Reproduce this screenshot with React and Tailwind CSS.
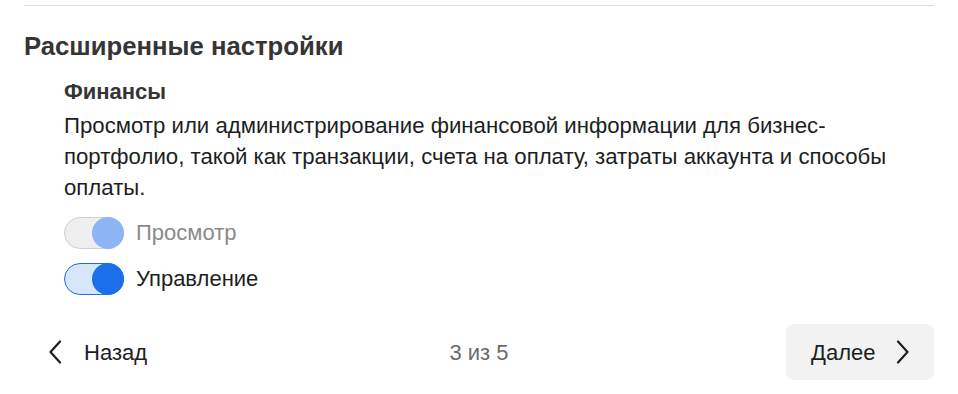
import React from "react";

function Toggle({ disabled }) {
  return (
    <div
      className={
        "relative h-8 w-[60px] shrink-0 rounded-full border " +
        (disabled
          ? "bg-[#efefef] border-[#d0d0d0]"
          : "bg-[#d8e6fd] border-[#1b6fe8]")
      }
    >
      <div
        className={
          "absolute top-[-1px] right-[-1px] h-8 w-8 rounded-full " +
          (disabled ? "bg-[#8db4f5]" : "bg-[#1b6fe8]")
        }
      />
    </div>
  );
}

export default function App() {
  return (
    <div
      className="w-[958px] h-[394px] bg-white px-6 text-[#1c1e21]"
      style={{ fontFamily: '"Liberation Sans", Arial, sans-serif' }}
    >
      <div className="pt-[5px]">
        <div className="h-px bg-[#dcdcdc]" />
      </div>
      <h2 className="mt-[25px] text-[25.7px] leading-[30px] font-bold text-[#353535]">
        Расширенные настройки
      </h2>
      <div className="pl-10 mt-[18px]">
        <div className="text-[22px] leading-[26px] font-bold text-[#353535]">Финансы</div>
        <p className="mt-[5px] text-[22.2px] leading-[31px]">
          Просмотр или администрирование финансовой информации для бизнес-портфолио, такой как транзакции, счета на оплату, затраты аккаунта и способы оплаты.
        </p>
        <div className="mt-[13px] flex flex-col gap-[13px]">
          <div className="flex items-center gap-3">
            <Toggle disabled />
            <span className="text-[22px] text-[#8a8a8a]">Просмотр</span>
          </div>
          <div className="flex items-center gap-3">
            <Toggle />
            <span className="text-[22px] text-[#1c1e21]">Управление</span>
          </div>
        </div>
      </div>
      <div className="mt-[29px] flex items-center">
        <div className="flex-1 flex">
          <button className="flex items-center h-14 pl-6 gap-[22px] text-[22px] text-[#1c1e21]">
            <svg width="14" height="24" viewBox="0 0 14 24" fill="none">
              <path d="M12 1.5 L2.5 12 L12 22.5" stroke="#1c1e21" strokeWidth="2.2" strokeLinecap="round" strokeLinejoin="round" />
            </svg>
            <span>Назад</span>
          </button>
        </div>
        <div className="text-[22px] text-[#6b6b6b]">3 из 5</div>
        <div className="flex-1 flex justify-end">
          <button className="flex items-center h-14 w-[148px] rounded-lg bg-[#f2f2f2] pl-[25px] gap-[21px] text-[22px] text-[#1c1e21]">
            <span>Далее</span>
            <svg width="14" height="24" viewBox="0 0 14 24" fill="none">
              <path d="M2 1.5 L11.5 12 L2 22.5" stroke="#1c1e21" strokeWidth="2.2" strokeLinecap="round" strokeLinejoin="round" />
            </svg>
          </button>
        </div>
      </div>
    </div>
  );
}
